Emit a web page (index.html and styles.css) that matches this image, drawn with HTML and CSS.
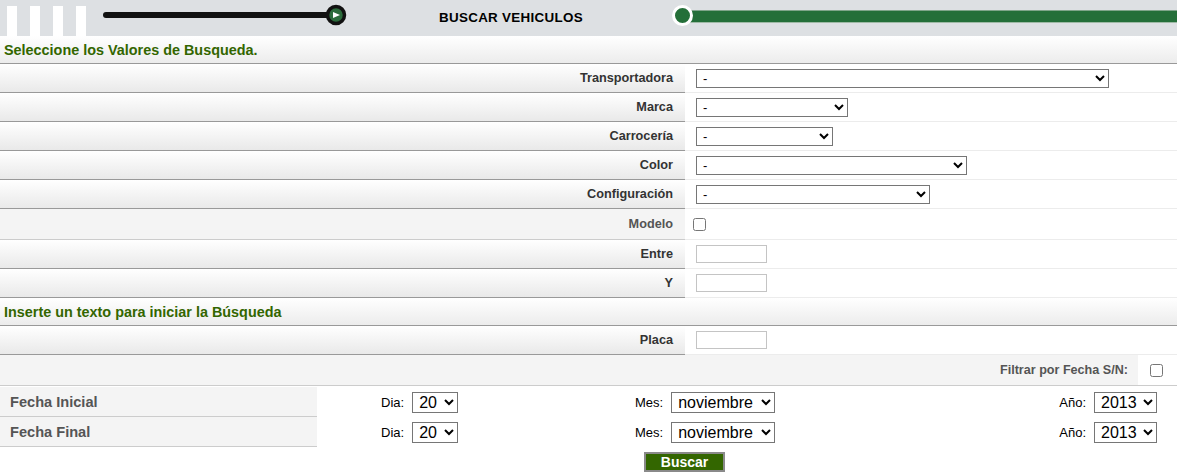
FILE: index.html
```html
<!DOCTYPE html>
<html lang="es">
<head>
<meta charset="utf-8">
<title>Buscar Vehiculos</title>
<link rel="stylesheet" href="styles.css">
</head>
<body>
<header class="topbar">
  <div class="stripes"><span></span><span></span><span></span><span></span></div>
  <svg class="track-left" width="265" height="36" viewBox="0 0 265 36">
    <line x1="20" y1="15" x2="245" y2="15" stroke="#111" stroke-width="6" stroke-linecap="round"/>
    <circle cx="250" cy="15" r="8.5" fill="#2b6b3b" stroke="#111" stroke-width="3.5"/>
    <polygon points="247,12 254,15 247,18" fill="#fff"/>
  </svg>
  <div class="title">BUSCAR VEHICULOS</div>
  <div class="track-right"><span class="dot"></span><span class="bar"></span></div>
</header>

<div class="section">Seleccione los Valores de Busqueda.</div>

<div class="form">
  <div class="row"><div class="lbl">Transportadora</div><div class="val"><select class="s-trans"><option>-</option></select></div></div>
  <div class="row"><div class="lbl">Marca</div><div class="val"><select class="s-marca"><option>-</option></select></div></div>
  <div class="row"><div class="lbl">Carrocería</div><div class="val"><select class="s-carro"><option>-</option></select></div></div>
  <div class="row"><div class="lbl">Color</div><div class="val"><select class="s-color"><option>-</option></select></div></div>
  <div class="row"><div class="lbl">Configuración</div><div class="val"><select class="s-conf"><option>-</option></select></div></div>
  <div class="row row-flat"><div class="lbl muted">Modelo</div><div class="val"><input type="checkbox" class="chk"></div></div>
  <div class="row"><div class="lbl">Entre</div><div class="val"><input type="text" class="txt"></div></div>
  <div class="row"><div class="lbl">Y</div><div class="val"><input type="text" class="txt"></div></div>
</div>

<div class="section">Inserte un texto para iniciar la Búsqueda</div>

<div class="form">
  <div class="row"><div class="lbl">Placa</div><div class="val"><input type="text" class="txt"></div></div>
</div>

<div class="filter">
  <div class="filter-lbl">Filtrar por Fecha S/N:</div>
  <div class="filter-val"><input type="checkbox" class="chk"></div>
</div>

<div class="dates">
  <div class="date-lbl">Fecha Inicial</div>
  <div class="date-dia"><label>Dia:</label><select class="d-dia"><option>20</option></select></div>
  <div class="date-rest">
    <div class="grp"><label>Mes:</label><select class="d-mes"><option>noviembre</option></select></div>
    <div class="grp"><label>Año:</label><select class="d-ano"><option>2013</option></select></div>
  </div>
  <div class="date-lbl">Fecha Final</div>
  <div class="date-dia"><label>Dia:</label><select class="d-dia"><option>20</option></select></div>
  <div class="date-rest">
    <div class="grp"><label>Mes:</label><select class="d-mes"><option>noviembre</option></select></div>
    <div class="grp"><label>Año:</label><select class="d-ano"><option>2013</option></select></div>
  </div>
</div>

<div class="actions"><button class="btn">Buscar</button></div>
</body>
</html>
```

FILE: styles.css
```css
* { box-sizing: border-box; }
body {
  margin: 0;
  font-family: "Liberation Sans", Arial, sans-serif;
  background: #fff;
  color: #333;
}

.topbar {
  display: flex;
  height: 36px;
  background: #dde0e3;
}
.stripes {
  display: flex;
  gap: 13px;
  padding-left: 7px;
  padding-top: 6px;
}
.stripes span {
  width: 10px;
  background: #fff;
}
.track-left { display: block; flex: none; }
.title {
  width: 233px;
  margin-left: 88px;
  flex: none;
  font-size: 13.4px;
  font-weight: bold;
  color: #000;
  padding-top: 10px;
  letter-spacing: 0.3px;
}
.track-right {
  flex: 1;
  display: flex;
  align-items: center;
  height: 20px;
  margin-top: 5px;
}
.track-right .dot {
  width: 21px;
  height: 21px;
  border-radius: 50%;
  border: 3px solid #fff;
  background: #246f39;
  flex: none;
  position: relative;
  z-index: 1;
}
.track-right .bar {
  flex: 1;
  height: 13px;
  margin-left: -3px;
  margin-top: 2px;
  background: #246f39;
  border-top: 1px solid #7fa58a;
  border-bottom: 1px solid #9fbaa6;
}

.section {
  height: 28px;
  padding: 6px 0 0 4px;
  font-size: 14.4px;
  font-weight: bold;
  color: #336600;
  background: linear-gradient(#ffffff, #ececec);
  border-bottom: 1px solid #999;
}

.row {
  display: grid;
  grid-template-columns: 685px 1fr;
  height: 29px;
}
.lbl {
  text-align: right;
  padding-right: 12px;
  font-size: 12.7px;
  font-weight: bold;
  color: #333;
  display: flex;
  align-items: center;
  justify-content: flex-end;
  background: linear-gradient(#ffffff, #e9e9e9);
  border-bottom: 1px solid #999;
}
.lbl.muted { color: #555; }
.row-flat { height: 31px; }
.row-flat .lbl {
  background: #f4f4f4;
  border-bottom: 1px solid #ccc;
}
.val {
  display: flex;
  align-items: center;
  padding-left: 11px;
  border-bottom: 1px solid #ececec;
}

select {
  font-family: "Liberation Sans", Arial, sans-serif;
  font-size: 13px;
  height: 19px;
  color: #000;
  border: 1px solid #767676;
  background: #fff;
  border-radius: 0;
  padding: 0 0 0 2px;
}
.s-trans { width: 413px; }
.s-marca { width: 152px; }
.s-carro { width: 137px; }
.s-color { width: 271px; }
.s-conf { width: 234px; }

.chk {
  width: 13px;
  height: 13px;
  margin: 0 0 0 -3px;
}
.txt {
  width: 71px;
  height: 18px;
  border: 1px solid #c4c4c4;
  padding: 0 2px;
  font-size: 13px;
}

.filter {
  display: grid;
  grid-template-columns: 1fr 39px;
  height: 31px;
  border-bottom: 1px solid #ccc;
}
.filter-lbl {
  background: #f4f4f4;
  display: flex;
  align-items: center;
  justify-content: flex-end;
  padding-right: 10px;
  font-size: 12.6px;
  font-weight: bold;
  color: #555;
}
.filter-val {
  display: flex;
  align-items: center;
  padding-left: 12px;
}
.filter-val .chk { margin: 0; }

.dates {
  display: grid;
  grid-template-columns: 317px 318px 1fr;
  grid-auto-rows: 30px;
  margin-top: 1px;
}
.date-lbl {
  background: #f4f4f4;
  border-bottom: 1px solid #ccc;
  display: flex;
  align-items: center;
  padding-left: 10px;
  font-size: 14.6px;
  font-weight: bold;
  color: #555;
}
.date-dia {
  display: flex;
  align-items: center;
  padding-left: 64px;
}
.date-rest {
  display: flex;
  align-items: center;
  justify-content: space-between;
  padding-right: 20px;
}
.grp { display: flex; align-items: center; }
.dates label {
  font-size: 13px;
  color: #000;
  margin-right: 8px;
}
.dates select {
  height: 21px;
  font-size: 16px;
  padding-left: 2px;
}
.d-dia { width: 46px; }
.d-mes { width: 104px; }
.d-ano { width: 63px; }

.actions {
  padding: 5px 0 0 644px;
}
.btn {
  width: 81px;
  height: 20px;
  background: #336600;
  border: 2px solid #8a8a8a;
  color: #fff;
  font-family: "Liberation Sans", Arial, sans-serif;
  font-size: 14px;
  font-weight: bold;
  padding: 0;
  line-height: 16px;
}
```
